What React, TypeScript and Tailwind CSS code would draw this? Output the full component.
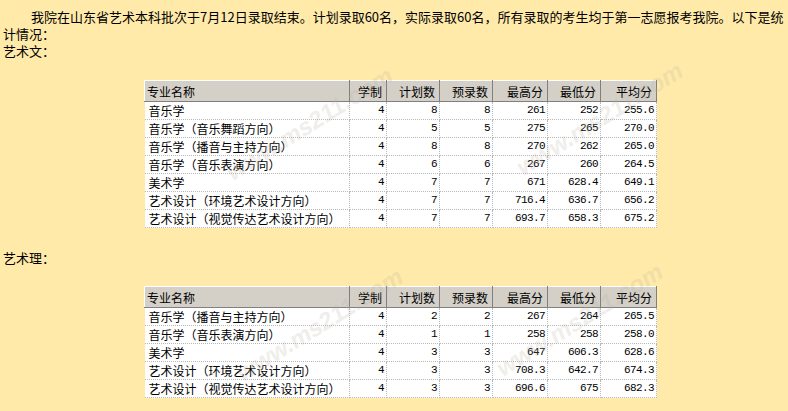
import React from "react";

type Row = [string, string, string, string, string, string, string];

const wenRows: Row[] = [
  ["音乐学", "4", "8", "8", "261", "252", "255.6"],
  ["音乐学（音乐舞蹈方向）", "4", "5", "5", "275", "265", "270.0"],
  ["音乐学（播音与主持方向）", "4", "8", "8", "270", "262", "265.0"],
  ["音乐学（音乐表演方向）", "4", "6", "6", "267", "260", "264.5"],
  ["美术学", "4", "7", "7", "671", "628.4", "649.1"],
  ["艺术设计（环境艺术设计方向）", "4", "7", "7", "716.4", "636.7", "656.2"],
  ["艺术设计（视觉传达艺术设计方向）", "4", "7", "7", "693.7", "658.3", "675.2"],
];

const liRows: Row[] = [
  ["音乐学（播音与主持方向）", "4", "2", "2", "267", "264", "265.5"],
  ["音乐学（音乐表演方向）", "4", "1", "1", "258", "258", "258.0"],
  ["美术学", "4", "3", "3", "647", "606.3", "628.6"],
  ["艺术设计（环境艺术设计方向）", "4", "3", "3", "708.3", "642.7", "674.3"],
  ["艺术设计（视觉传达艺术设计方向）", "4", "3", "3", "696.6", "675", "682.3"],
];

const headers = ["专业名称", "学制", "计划数", "预录数", "最高分", "最低分", "平均分"];
const widths = ["w-[205px]", "w-[37px]", "w-[53px]", "w-[53px]", "w-[55px]", "w-[53px]", "w-[56px]"];

const cjk = "font-['Noto_Sans_CJK_SC',sans-serif]";
const mono = "font-['Liberation_Mono',monospace] text-[11px] tracking-[-0.6px]";

// faint diagonal site watermark lying over the tables
function Watermark({ className }: { className: string }) {
  return (
    <span
      className={`pointer-events-none absolute -rotate-[32deg] whitespace-nowrap font-['Liberation_Sans',sans-serif] text-[24px] font-bold italic text-[#b8b0a0] opacity-20 ${className}`}
    >
      www.ms211.com
    </span>
  );
}

function ScoreTable({ rows, marks }: { rows: Row[]; marks: string[] }) {
  return (
    <div className="relative ml-[141px] w-[512px]">
      <table className={`w-[512px] table-fixed border-collapse text-[12px] text-black ${cjk}`}>
        <colgroup>
          {widths.map((w, i) => (
            <col key={i} className={w} />
          ))}
        </colgroup>
        <thead>
          <tr className="h-[21px]">
            {headers.map((h, i) => (
              <th
                key={h}
                className={`border-t border-l border-t-white border-l-white border-r border-b border-r-[#808080] border-b-[#808080] bg-[#d4d0c8] p-0 font-normal leading-[19px] ${
                  i === 0 ? "pl-[2px] text-left" : "pr-[4px] text-right"
                }`}
              >
                {h}
              </th>
            ))}
          </tr>
        </thead>
        <tbody className="bg-white">
          {rows.map((r) => (
            <tr key={r[0]} className="h-[18px]">
              {r.map((c, i) => (
                <td
                  key={i}
                  className={`border-b border-r border-dotted border-[#b8b8b8] p-0 leading-[17px] ${
                    i === 0 ? "pl-[4px] text-left" : `pr-[2px] text-right ${mono}`
                  }`}
                >
                  {c}
                </td>
              ))}
            </tr>
          ))}
        </tbody>
      </table>
      {marks.map((m) => (
        <Watermark key={m} className={m} />
      ))}
    </div>
  );
}

export default function App() {
  return (
    <div className={`min-h-[411px] bg-[#ffeaa9] pl-[3px] pt-[8px] text-[13px] leading-[17px] text-black ${cjk}`}>
      <p className="indent-[28px]">
        我院在山东省艺术本科批次于7月12日录取结束。计划录取60名，实际录取60名，所有录取的考生均于第一志愿报考我院。以下是统计情况：
      </p>
      <p>艺术文：</p>
      <div className="mt-[21px]">
        <ScoreTable rows={wenRows} marks={["left-[70px] top-[35px]", "left-[360px] top-[30px]"]} />
      </div>
      <p className="mt-[21px]">艺术理：</p>
      <div className="mt-[20px]">
        <ScoreTable rows={liRows} marks={["left-[80px] top-[30px]", "left-[340px] top-[25px]"]} />
      </div>
    </div>
  );
}
